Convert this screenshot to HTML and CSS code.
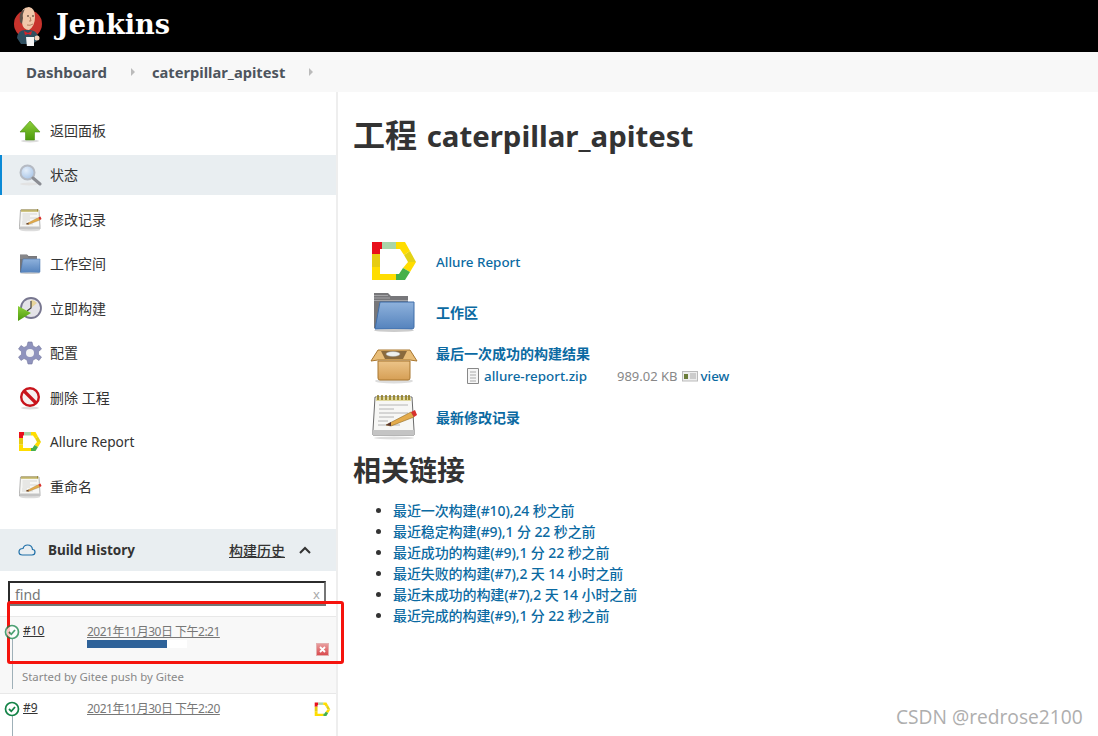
FILE: index.html
```html
<!DOCTYPE html>
<html lang="zh">
<head>
<meta charset="utf-8">
<title>caterpillar_apitest [Jenkins]</title>
<link rel="stylesheet" href="styles.css">
</head>
<body>
<svg class="defs" width="0" height="0" aria-hidden="true">
  <defs>
    <linearGradient id="gFolder" x1="0" y1="0" x2="0" y2="1"><stop offset="0" stop-color="#8fb2dc"/><stop offset="1" stop-color="#5583bd"/></linearGradient>
    <linearGradient id="gBox" x1="0" y1="0" x2="0" y2="1"><stop offset="0" stop-color="#ecc489"/><stop offset="1" stop-color="#d69f55"/></linearGradient>
    <linearGradient id="gArrow" x1="0" y1="0" x2="0" y2="1"><stop offset="0" stop-color="#8ed13c"/><stop offset="1" stop-color="#4c9a0a"/></linearGradient>
    <linearGradient id="gCancel" x1="0" y1="0" x2="0" y2="1"><stop offset="0" stop-color="#e9a0a0"/><stop offset="1" stop-color="#d9484c"/></linearGradient>
    <radialGradient id="gLens" cx=".4" cy=".35" r=".8"><stop offset="0" stop-color="#e4eefa"/><stop offset="1" stop-color="#9dbde3"/></radialGradient>
    <symbol id="i-allure" viewBox="-2 -4 48 48">
      <path d="M0 0H10V7H8V12H0Z" fill="#e8101c"/>
      <path d="M10 0H24V7H10Z" fill="#a9d5a9"/>
      <path d="M24 0H33L38 9L32 13L28 7H24Z" fill="#ffdd00"/>
      <path d="M38 9L44 20H36L32 13Z" fill="#e3d214"/>
      <path d="M44 20L38 30L31 26L36 20Z" fill="#ffdd00"/>
      <path d="M38 30L33 38H24V32H27L31 26Z" fill="#46b04a"/>
      <path d="M0 38H24V32H8V25H0Z" fill="#ffdd00"/>
      <path d="M0 12H8V25H0Z" fill="#e6cc12"/>
    </symbol>
    <symbol id="i-folder" viewBox="0 0 48 48">
      <path d="M4 5H18L21 8H38V14H10L7 40H4Z" fill="#77777a"/>
      <path d="M4 7.500H18M4 10H20M4 12.500H38" stroke="#a5a5a8" stroke-width="1"/>
      <path d="M10 14H44V39Q44 41 42 41H5Z" fill="url(#gFolder)" stroke="#3f6da8" stroke-width="1"/>
      <ellipse cx="24" cy="42.500" rx="20" ry="1.500" fill="#ccc"/>
    </symbol>
    <symbol id="i-box" viewBox="0 0 48 48">
      <ellipse cx="24" cy="41" rx="19" ry="2.500" fill="#ddd"/>
      <path d="M1 21L8 10H40L47 21L40 20H8Z" fill="#e8bd78" stroke="#a8762f"/>
      <path d="M11 11H37L33 19H15Z" fill="#8a6a3c"/>
      <ellipse cx="23" cy="14" rx="7" ry="2.500" fill="#eef0ee" stroke="#999" stroke-width=".5"/>
      <path d="M8 21H40V38Q40 40 38 40H10Q8 40 8 38Z" fill="url(#gBox)" stroke="#a8762f"/>
    </symbol>
    <symbol id="i-note" viewBox="0 0 48 48">
      <ellipse cx="24" cy="45" rx="20" ry="1.500" fill="#ddd"/>
      <path d="M5 4H42L44 37V42H3V37Z" fill="#f7f7f5" stroke="#6b6b6b"/>
      <path d="M3 37H44V42H3Z" fill="#c4c4c4"/>
      <path d="M6 4H41V8H6Z" fill="#e0d9a0"/>
      <path d="M8 2V7M12 2V7M16 2V7M20 2V7M24 2V7M28 2V7M32 2V7M36 2V7M39 2V7" stroke="#8d7a1e" stroke-width="1.600"/>
      <path d="M9 12H38M9 16H24M9 20H38M9 24H24M8 28H18M8 32H30" stroke="#b4b4b4"/>
      <path d="M16 32L41 19L44 24L21 33Z" fill="#e4ab4b" stroke="#8d6a24" stroke-width=".6"/>
      <path d="M16 32L21 29L21 33Z" fill="#533"/>
      <path d="M41 19L45 17L47 22L44 24Z" fill="#d8312c"/>
    </symbol>
    <symbol id="i-arrow" viewBox="0 0 24 24">
      <ellipse cx="12" cy="22" rx="9" ry="1.500" fill="#ddd"/>
      <path d="M12 2L22 13H16.500V21H7.500V13H2Z" fill="url(#gArrow)" stroke="#4c8f10" stroke-width=".6"/>
    </symbol>
    <symbol id="i-search" viewBox="0 0 24 24">
      <ellipse cx="11" cy="21" rx="9" ry="1.500" fill="#e2e2e2"/>
      <circle cx="9.500" cy="9.500" r="7" fill="url(#gLens)" stroke="#b5bac3" stroke-width="2"/>
      <path d="M15 15L22 21" stroke="#8b8d93" stroke-width="3" stroke-linecap="round"/>
    </symbol>
    <symbol id="i-clock" viewBox="0 0 24 24">
      <circle cx="13" cy="11" r="10" fill="#e4e3e8" stroke="#77768f" stroke-width="1.800"/>
      <path d="M13 3A8 8 0 0 1 19 6L13 11Z" fill="#e7d49a"/>
      <path d="M13 4V11L9 14" stroke="#444" fill="none" stroke-width="1.200"/>
      <path d="M0 9L13 16L0 24Z" fill="url(#gArrow)"/>
    </symbol>
    <symbol id="i-gear" viewBox="0 0 24 24">
      <path d="M10 1H14L15 5L18 6.500L21 4.500L23.500 8L20.500 10.500V13.500L23.500 16L21 19.500L18 17.500L15 19L14 23H10L9 19L6 17.500L3 19.500L.500 16L3.500 13.500V10.500L.500 8L3 4.500L6 6.500L9 5Z" fill="#8f93bd" stroke="#74779e" stroke-width=".6"/>
      <circle cx="12" cy="12" r="4" fill="#f4f4f4"/>
    </symbol>
    <symbol id="i-stop" viewBox="0 0 24 24">
      <ellipse cx="12" cy="22" rx="9" ry="1.500" fill="#ddd"/>
      <circle cx="12" cy="11" r="8.800" fill="#f6f1f1" stroke="#c8141c" stroke-width="2.400"/>
      <path d="M6 5L18 17" stroke="#c8141c" stroke-width="3.200"/>
    </symbol>
    <symbol id="i-ok" viewBox="0 0 16 16">
      <circle cx="8" cy="8" r="6.500" fill="#fff" stroke="#138347" stroke-width="1.700"/>
      <path d="M5 8L7.300 10.300L11 6" fill="none" stroke="#138347" stroke-width="1.800"/>
    </symbol>
  </defs>
</svg>

<header class="topbar">
  <svg class="logo" viewBox="0 0 28 40" width="28" height="40" aria-hidden="true">
    <circle cx="14" cy="18" r="14" fill="#c8332c"/>
    <path d="M3 32Q4 23 13 24Q22 23 24 30L23 35L18 38H7Z" fill="#2f4f60"/>
    <path d="M7 11Q7 1 15 1Q21 2 21 11Q21 20 15 24Q9 24 8 17Z" fill="#f0c8aa"/>
    <path d="M6 16Q4 6 11 3Q8 8 9 12L8 18Z" fill="#5d5048"/>
    <path d="M13 10H15M18 10H20" stroke="#3a2a20"/>
    <path d="M16 11L17 15H15M13 19Q16 20 19 18" stroke="#a56a4c" fill="none" stroke-width=".8"/>
    <path d="M10 25L14 27L18 25L17 29L14 28L11 29Z" fill="#d8222a"/>
    <path d="M12 31H20V41H13Z" fill="#f4f4f4"/>
    <circle cx="23" cy="32" r="2.500" fill="#f0d0bb"/>
  </svg>
  <span class="brand">Jenkins</span>
</header>

<nav class="crumbs">
  <a class="crumb" href="#">Dashboard</a><span class="caret"></span>
  <a class="crumb crumb-job" href="#">caterpillar_apitest</a><span class="caret"></span>
</nav>

<div class="page">
  <aside class="side">
    <ul class="tasks">
      <li class="task"><svg class="ti"><use href="#i-arrow"/></svg>返回面板</li>
      <li class="task active"><svg class="ti"><use href="#i-search"/></svg>状态</li>
      <li class="task"><svg class="ti"><use href="#i-note"/></svg>修改记录</li>
      <li class="task"><svg class="ti"><use href="#i-folder"/></svg>工作空间</li>
      <li class="task"><svg class="ti"><use href="#i-clock"/></svg>立即构建</li>
      <li class="task"><svg class="ti"><use href="#i-gear"/></svg>配置</li>
      <li class="task"><svg class="ti"><use href="#i-stop"/></svg>删除 工程</li>
      <li class="task task-en"><svg class="ti"><use href="#i-allure"/></svg>Allure Report</li>
      <li class="task"><svg class="ti"><use href="#i-note"/></svg>重命名</li>
    </ul>

    <section class="history">
      <div class="hist-head">
        <svg class="cloud" viewBox="0 0 18 12" width="18" height="12" aria-hidden="true"><path d="M4.500 11H14Q17 11 17 8Q17 5.500 14.500 5.500Q14 1 9.500 1Q6 1 5 4.500Q1 4.500 1 8Q1 11 4.500 11Z" fill="none" stroke="#1f6fa8" stroke-width="1.200"/></svg>
        <b class="hist-title">Build History</b>
        <a class="hist-link" href="#">构建历史</a>
        <svg class="chev" viewBox="0 0 12 8" width="12" height="8" aria-hidden="true"><path d="M1 7L6 2L11 7" fill="none" stroke="#333" stroke-width="2"/></svg>
      </div>
      <div class="find"><span>find</span><span class="find-x">x</span></div>
      <div class="build build-run">
        <svg class="ok ok-run"><use href="#i-ok"/></svg>
        <a class="num" href="#">#10</a>
        <div class="when-col">
          <a class="when" href="#">2021年11月30日 下午2:21</a>
          <div class="progress"><div class="bar" style="width:80%"></div></div>
        </div>
        <svg class="cancel" viewBox="0 0 13 13" aria-hidden="true"><rect x=".5" y=".5" width="12" height="12" fill="url(#gCancel)" stroke="#e4b0b0"/><path d="M4 4L9 9M9 4L4 9" stroke="#fff" stroke-width="1.800"/></svg>
        <div class="cause">Started by Gitee push by Gitee</div>
      </div>
      <div class="build">
        <svg class="ok"><use href="#i-ok"/></svg>
        <a class="num" href="#">#9</a>
        <div class="when-col"><a class="when" href="#">2021年11月30日 下午2:20</a></div>
        <svg class="badge"><use href="#i-allure"/></svg>
        <div class="cause">Started by Gitee push by Gitee</div>
      </div>
    </section>
  </aside>

  <main class="main">
    <h1 class="title"><span class="title-cjk">工程</span> caterpillar_apitest</h1>
    <div class="actions">
      <div class="action a1"><svg class="ai"><use href="#i-allure"/></svg><a href="#">Allure Report</a></div>
      <div class="action a2"><svg class="ai"><use href="#i-folder"/></svg><a class="bold" href="#">工作区</a></div>
      <div class="action a3"><svg class="ai"><use href="#i-box"/></svg>
        <div>
          <a class="bold" href="#">最后一次成功的构建结果</a>
          <div class="artifact">
            <svg class="file" viewBox="0 0 14 16" width="14" height="16" aria-hidden="true"><path d="M1.500 .500H12.500V15.500H1.500Z" fill="#f6f6f6" stroke="#888"/><path d="M4 4H10M4 7H10M4 10H10M4 13H10" stroke="#aaa"/></svg>
            <a class="art-name" href="#">allure-report.zip</a>
            <span class="size">989.02 KB</span>
            <svg class="card" viewBox="0 0 16 12" width="16" height="12" aria-hidden="true"><rect x=".5" y="1.500" width="15" height="9.500" fill="#eee" stroke="#bbb"/><rect x="2" y="4" width="4" height="5" fill="#6b7d3a"/><path d="M8 4H14M8 6H14M8 8H14" stroke="#aaa"/></svg>
            <a class="view" href="#">view</a>
          </div>
        </div>
      </div>
      <div class="action a4"><svg class="ai"><use href="#i-note"/></svg><a class="bold" href="#">最新修改记录</a></div>
    </div>
    <h2 class="sub">相关链接</h2>
    <ul class="links">
      <li><a href="#">最近一次构建(#10),24 秒之前</a></li>
      <li><a href="#">最近稳定构建(#9),1 分 22 秒之前</a></li>
      <li><a href="#">最近成功的构建(#9),1 分 22 秒之前</a></li>
      <li><a href="#">最近失败的构建(#7),2 天 14 小时之前</a></li>
      <li><a href="#">最近未成功的构建(#7),2 天 14 小时之前</a></li>
      <li><a href="#">最近完成的构建(#9),1 分 22 秒之前</a></li>
    </ul>
  </main>
</div>

<div class="redbox"></div>
<div class="mark">CSDN @redrose2100</div>
</body>
</html>
```
FILE: styles.css
```css
* { box-sizing: border-box; }
html, body { margin: 0; height: 736px; overflow: hidden; }
body {
  font-family: "Noto Sans", "Noto Sans CJK SC", sans-serif;
  font-size: 14px;
  color: #333;
  background: #fff;
  position: relative;
}
a { color: #0b6aa2; text-decoration: none; }
ul { margin: 0; padding: 0; }
.defs { position: absolute; }

.topbar { height: 52px; background: #000; display: flex; align-items: center; padding-left: 14px; gap: 13px; }
.logo { display: block; }
.brand { font-family: "DejaVu Serif", serif; font-weight: 700; font-size: 27.200px; color: #fff; padding: 0 0 5px 1px; }

.crumbs { height: 40px; background: #f8f8f8; display: flex; align-items: center; padding-left: 26px; }
.crumb { font-weight: 700; font-size: 15px; color: #4d545d; }
.crumb-job { margin-left: 17px; font-size: 14.700px; }
.caret { width: 0; height: 0; margin-left: 24px; border-left: 4px solid #bbb; border-top: 4px solid transparent; border-bottom: 4px solid transparent; }

.page { display: flex; height: 644px; }
.side { width: 338px; flex: none; border-right: 2px solid #eee; padding-top: 19px; overflow: hidden; }
.tasks { list-style: none; display: flex; flex-direction: column; gap: 4.44px; }
.task { height: 40px; display: flex; align-items: center; padding-left: 18px; gap: 8px; line-height: 1; }
.task-en { font-size: 13.700px; }
.task.active { background: #e9eef1; border-left: 2px solid #0b8ad6; padding-left: 16px; }
.ti { width: 24px; height: 24px; flex: none; }

.history { margin-top: 22px; }
.hist-head { height: 42px; background: #e9eef1; display: flex; align-items: center; padding-left: 18px; }
.cloud { flex: none; }
.hist-title { margin-left: 12px; font-size: 13.500px; }
.hist-link { margin-left: auto; color: #333; font-weight: 500; text-decoration: underline; }
.chev { margin: 0 25px 0 14px; }

.find { margin: 10px 10px 0 8px; height: 25px; border: 2px solid; border-color: #2b2b2b #767676 #767676 #2b2b2b; display: flex; justify-content: space-between; align-items: center; padding: 2px 4px 0 5px; font-size: 14px; color: #777; background: #fff; }
.find-x { color: #aaa; font-size: 13px; }

.build { display: grid; grid-template-columns: 19px 64px 1fr 22px; padding: 6px 7px 0 4px; border-top: 1px solid #e8e8e8; position: relative; }
.build-run { margin-top: 10px; height: 77px; background: #f8f8f8; }
.ok { width: 16px; height: 16px; grid-column: 1; margin-top: 1px; position: relative; z-index: 1; }
.ok-run { opacity: .75; }
.num { color: #333; font-size: 12px; line-height: 16px; text-decoration: underline; }
.when { color: #777; font-size: 12px; letter-spacing: -.5px; text-decoration: underline; }
.when-col { line-height: 16px; }
.progress { width: 100px; height: 8px; background: #fff; }
.bar { height: 100%; background: #2e6299; }
.cancel { width: 13px; height: 13px; margin-top: 20px; justify-self: end; }
.badge { width: 17px; height: 17px; margin: 1px -2px 0 0; justify-self: end; }
.cause { grid-column: 1 / -1; padding-left: 18px; margin-top: 17px; font-size: 11.400px; color: #888; }
.build-run .cause { margin-top: 4px; }
.build::before { content: ""; position: absolute; left: 12px; top: 22px; bottom: 0; width: 1px; background: #9fb0b8; }
.build-run::before { bottom: 4px; }

.main { flex: 1; padding: 0 0 0 16px; }
.title { margin: 22px 0 0 -1px; height: 42px; font-size: 29.400px; line-height: 42px; font-weight: 700; color: #333; }
.title-cjk { font-size: 32px; margin-right: 2px; }
.actions { margin-top: 82px; }
.action { display: flex; align-items: center; padding-left: 16px; gap: 18px; }
.action a { font-size: 13.400px; font-weight: 500; }
.action a.bold { font-size: 14px; font-weight: 700; }
.ai { width: 48px; height: 48px; flex: none; }
.a1 { height: 48px; }
.a2 { height: 48px; margin-top: 2px; }
.a3 { height: 48px; margin-top: 4px; }
.a4 { height: 48px; margin-top: 5px; }
.artifact { display: flex; align-items: center; margin: 3px 0 0 30px; height: 20px; }
.file { flex: none; margin-right: 4px; }
.size { margin-left: 30px; color: #888; font-size: 13px; }
.card { margin: 0 3px 0 4px; }
.sub { margin: 11px 0 0 -1px; font-size: 28px; line-height: 36px; font-weight: 700; color: #333; }
.links { margin-top: 12px; padding-left: 39px; font-size: 14px; letter-spacing: -.1px; }
.links li { height: 21px; line-height: 21px; }
.links a { font-weight: 500; }

.redbox { position: absolute; left: 7px; top: 601px; width: 337px; height: 63px; border: 3px solid #f5130d; border-radius: 3px; }
.mark { position: absolute; left: 896px; top: 703px; font-family: "Open Sans", sans-serif; font-size: 19.200px; line-height: 28px; color: #aeaeae; }
```
